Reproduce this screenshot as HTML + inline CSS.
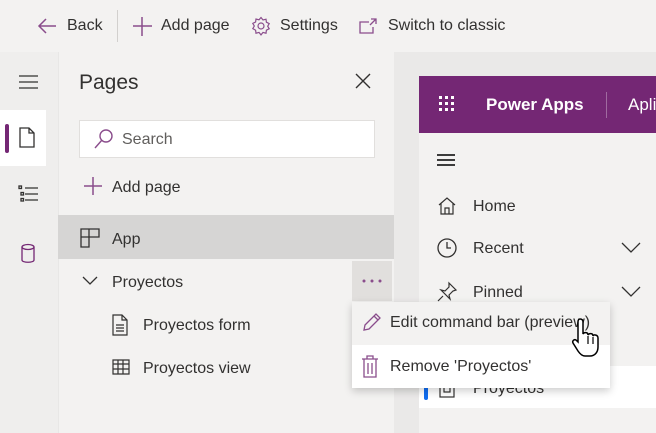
<!DOCTYPE html>
<html><head><style>
*{margin:0;padding:0;box-sizing:border-box}
body{width:656px;height:433px;overflow:hidden;background:#f3f2f1;font-family:"Liberation Sans",sans-serif;color:#323130;position:relative;font-size:16px}
.a{position:absolute;white-space:nowrap}
svg{position:absolute}
</style></head><body>
<!-- top bar -->
<svg style="left:36px;top:15px" width="22" height="22" viewBox="0 0 22 22" fill="none" stroke="#8a4d8c" stroke-width="1.5"><path d="M3 11h17M10 4l-7 7 7 7"/></svg>
<div class="a" style="left:67px;top:17px">Back</div>
<div class="a" style="left:117px;top:10px;width:1px;height:32px;background:#d2d0ce"></div>
<svg style="left:131px;top:15px" width="22" height="22" fill="none" stroke="#8a4d8c" stroke-width="1.5"><path d="M11 2v19M2 11h19"/></svg>
<div class="a" style="left:161px;top:17px">Add page</div>
<svg style="left:251px;top:16px" width="20" height="20" viewBox="0 0 20 20" fill="none" stroke="#8a4d8c" stroke-width="1.2"><circle cx="10" cy="10" r="3"/><path d="M10 1.5l2 2.5 3-.8.4 3 2.8 1.4-1.5 2.6 1.5 2.6-2.8 1.4-.4 3-3-.8-2 2.5-2-2.5-3 .8-.4-3L1.8 12.6 3.3 10 1.8 7.4l2.8-1.4.4-3 3 .8z"/></svg>
<div class="a" style="left:280px;top:17px">Settings</div>
<svg style="left:358px;top:16px" width="20" height="20" fill="none" stroke="#8a4d8c" stroke-width="1.3"><path d="M11 6H2v11h13v-6M13 3h5v5M18 3l-6 6"/></svg>
<div class="a" style="left:388px;top:17px">Switch to classic</div>
<!-- rail -->
<div class="a" style="left:0;top:52px;width:58px;height:381px;background:#efeeed"></div>
<svg style="left:18px;top:74px" width="22" height="16" stroke="#323130" stroke-width="1.3"><path d="M1 2h19M1 8h19M1 14h19"/></svg>
<div class="a" style="left:0;top:110px;width:46px;height:56px;background:#fff"></div>
<div class="a" style="left:5px;top:124px;width:4px;height:29px;background:#742774;border-radius:2px"></div>
<svg style="left:18px;top:127px" width="18" height="22" fill="none" stroke="#323130" stroke-width="1.3"><path d="M2 1h9l5 5v14H2zM11 1v5h5"/></svg>
<svg style="left:18px;top:185px" width="22" height="20" fill="none" stroke="#323130" stroke-width="1.3"><path d="M7 3h13M7 9h13M7 15h13"/><rect x="1" y="1" width="2.5" height="2.5"/><rect x="3" y="7.5" width="2.5" height="2.5"/><rect x="3" y="13.5" width="2.5" height="2.5"/></svg>
<svg style="left:20px;top:243px" width="16" height="22" fill="none" stroke="#742774" stroke-width="1.3"><ellipse cx="8" cy="4" rx="6" ry="2.5"/><path d="M2 4v13c0 3 12 3 12 0V4"/></svg>
<!-- panel -->
<div class="a" style="left:58px;top:52px;width:336px;height:381px;background:#f3f2f1;border-left:1px solid #e8e7e6"></div>
<div class="a" style="left:79px;top:71px;font-size:21px">Pages</div>
<svg style="left:354px;top:72px" width="18" height="18" stroke="#323130" stroke-width="1.4"><path d="M2 2l14 14M16 2L2 16"/></svg>
<div class="a" style="left:79px;top:120px;width:296px;height:38px;background:#fff;border:1px solid #e1dfdd"></div>
<svg style="left:93px;top:128px" width="22" height="22" fill="none" stroke="#8a4d8c" stroke-width="1.4"><circle cx="13" cy="8" r="6"/><path d="M9 12L2 20"/></svg>
<div class="a" style="left:122px;top:131px;color:#605e5c">Search</div>
<svg style="left:83px;top:176px" width="20" height="20" stroke="#8a4d8c" stroke-width="1.5"><path d="M10 1v18M1 10h18"/></svg>
<div class="a" style="left:112px;top:179px">Add page</div>
<div class="a" style="left:58px;top:215px;width:336px;height:44px;background:#d6d5d4"></div>
<svg style="left:80px;top:228px" width="20" height="20" fill="none" stroke="#323130" stroke-width="1.3"><path d="M1 1h18v8H1zM9 1v18H1V9"/></svg>
<div class="a" style="left:112px;top:231px">App</div>
<svg style="left:82px;top:276px" width="16" height="10" fill="none" stroke="#323130" stroke-width="1.3"><path d="M1 1l7 7 7-7"/></svg>
<div class="a" style="left:112px;top:274px">Proyectos</div>
<div class="a" style="left:352px;top:261px;width:40px;height:40px;background:#e1dfdd"></div>
<svg style="left:362px;top:279px" width="20" height="4" fill="#8a4d8c"><circle cx="2" cy="2" r="1.5"/><circle cx="10" cy="2" r="1.5"/><circle cx="18" cy="2" r="1.5"/></svg>
<svg style="left:112px;top:314px" width="16" height="22" fill="none" stroke="#323130" stroke-width="1.2"><path d="M1 1h9l5 5v15H1zM10 1v5h5M4 11h8M4 14h8M4 17h8"/></svg>
<div class="a" style="left:143px;top:317px">Proyectos form</div>
<svg style="left:112px;top:359px" width="18" height="16" fill="none" stroke="#323130" stroke-width="1.2"><path d="M1 1h16v14H1zM1 5h16M1 10h16M6 1v14M11 1v14"/></svg>
<div class="a" style="left:143px;top:360px">Proyectos view</div>
<!-- right -->
<div class="a" style="left:394px;top:52px;width:262px;height:381px;background:#eae9e8"></div>
<div class="a" style="left:419px;top:76px;width:237px;height:57px;background:#742774"></div>
<svg style="left:438px;top:95px" width="18" height="18" fill="#fff"><rect x="1" y="1" width="3" height="3"/><rect x="7" y="1" width="3" height="3"/><rect x="13" y="1" width="3" height="3"/><rect x="1" y="7" width="3" height="3"/><rect x="7" y="7" width="3" height="3"/><rect x="13" y="7" width="3" height="3"/><rect x="1" y="13" width="3" height="3"/><rect x="7" y="13" width="3" height="3"/><rect x="13" y="13" width="3" height="3"/></svg>
<div class="a" style="left:486px;top:95px;color:#fff;font-weight:bold;font-size:17px">Power Apps</div>
<div class="a" style="left:606px;top:92px;width:1px;height:26px;background:#a06aa0"></div>
<div class="a" style="left:628px;top:95px;color:#fff;font-size:17px">Apli</div>
<div class="a" style="left:419px;top:133px;width:237px;height:300px;background:#f3f2f1"></div>
<svg style="left:436px;top:153px" width="20" height="14" stroke="#000" stroke-width="1.4"><path d="M1 2h18M1 7h18M1 12h18"/></svg>
<svg style="left:437px;top:196px" width="20" height="20" fill="none" stroke="#323130" stroke-width="1.2"><path d="M2 9l8-7 8 7M4 7v11h12V7M8 18v-6h4v6"/></svg>
<div class="a" style="left:473px;top:198px">Home</div>
<svg style="left:436px;top:237px" width="22" height="22" fill="none" stroke="#323130" stroke-width="1.3"><circle cx="11" cy="11" r="9"/><path d="M11 5v6h4"/></svg>
<div class="a" style="left:473px;top:240px">Recent</div>
<svg style="left:621px;top:242px" width="20" height="12" fill="none" stroke="#323130" stroke-width="1.3"><path d="M1 1l9 9 9-9"/></svg>
<svg style="left:436px;top:281px" width="22" height="22" fill="none" stroke="#323130" stroke-width="1.2"><path d="M13 2l7 7-3 1-4 4 1 4-9-9 4 1 4-4zM7 15l-5 5"/></svg>
<div class="a" style="left:473px;top:284px">Pinned</div>
<svg style="left:621px;top:286px" width="20" height="12" fill="none" stroke="#323130" stroke-width="1.3"><path d="M1 1l9 9 9-9"/></svg>
<div class="a" style="left:419px;top:366px;width:237px;height:42px;background:#fff"></div>
<div class="a" style="left:424px;top:380px;width:4px;height:20px;background:#0f6cf0;border-radius:2px"></div>
<svg style="left:439px;top:378px" width="16" height="20" fill="none" stroke="#323130" stroke-width="1.2"><rect x="1" y="1" width="14" height="18"/><rect x="5" y="8" width="6" height="6"/></svg>
<div class="a" style="left:473px;top:380px">Proyectos</div>
<!-- menu -->
<div class="a" style="left:352px;top:302px;width:258px;height:86px;background:#fff;box-shadow:0 3px 8px rgba(0,0,0,.2)"></div>
<div class="a" style="left:352px;top:302px;width:258px;height:43px;background:#f3f2f1"></div>
<svg style="left:361px;top:311px" width="22" height="22" fill="none" stroke="#8a4d8c" stroke-width="1.3"><path d="M3 19l1-5L15 3l4 4L8 18zM13 5l4 4"/></svg>
<div class="a" style="left:390px;top:314px">Edit command bar (preview)</div>
<svg style="left:361px;top:355px" width="18" height="24" fill="none" stroke="#8a4d8c" stroke-width="1.3"><path d="M1 4h16M6 4V1h6v3M3 4v18h12V4M7 8v11M11 8v11"/></svg>
<div class="a" style="left:390px;top:358px">Remove 'Proyectos'</div>
<!-- cursor -->
<svg style="left:570px;top:316px" width="36" height="42" viewBox="0 0 36 42"><path d="M10 3c2 0 3 1 3 3v12c1-2 5-2 5 1 1-2 5-2 5 1 1-2 5-1 5 2v9c0 5-3 9-8 9h-5c-3 0-5-2-7-5l-5-8c-1-2 1-4 3-3l2 2V6c0-2 1-3 2-3z" fill="#fff" stroke="#000" stroke-width="1.5"/><path d="M18 20v8M23 21v7" stroke="#000" stroke-width="1.2"/></svg>
</body></html>
